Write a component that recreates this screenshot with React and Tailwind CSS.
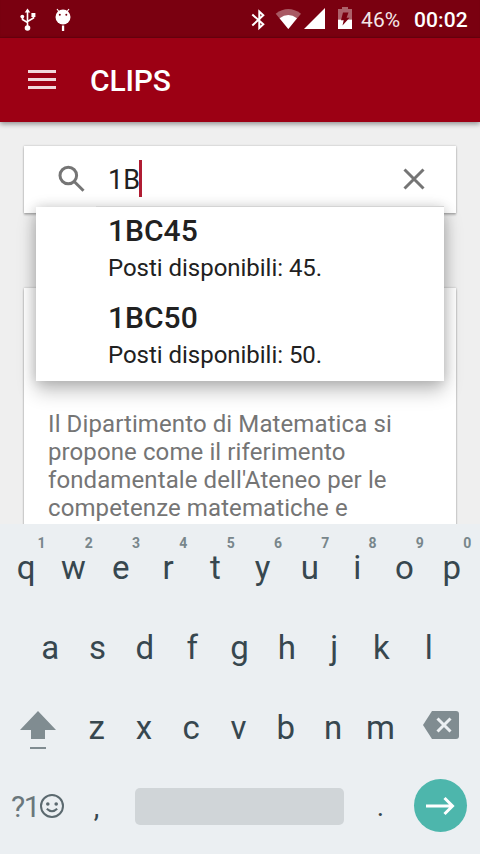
import React from 'react';

const topRow = [
  ['q', '1'], ['w', '2'], ['e', '3'], ['r', '4'], ['t', '5'],
  ['y', '6'], ['u', '7'], ['i', '8'], ['o', '9'], ['p', '0'],
];

const results = [
  { name: '1BC45', seats: 'Posti disponibili: 45.' },
  { name: '1BC50', seats: 'Posti disponibili: 50.' },
];

const description = [
  'Il Dipartimento di Matematica si',
  'propone come il riferimento',
  "fondamentale dell'Ateneo per le",
  'competenze matematiche e',
];

function Key({ label, hint }) {
  return (
    <div className="relative h-20 w-[47.3px] text-center leading-[80px]">
      {label}
      {hint && (
        <span className="absolute top-[7px] left-[34px] w-[10px] text-center text-[14px] leading-4 font-bold text-[#78868b]">
          {hint}
        </span>
      )}
    </div>
  );
}

function StatusBar() {
  return (
    <div className="flex h-[38px] items-center bg-[#7a0010] text-white shadow-[inset_0_-1px_1px_rgba(0,0,0,0.12)]">
      <svg className="ml-5 h-6 w-4" viewBox="0 0 16 24" fill="none" stroke="white" strokeWidth="1.6">
        <path d="M7.5 3v16M2.500 9v3.500l5 3M13.500 7v4l-6 3.500" />
        <path d="M7.500 1.500l2.800 4H4.700z" fill="white" stroke="none" />
        <circle cx="2.300" cy="9.600" r="1.900" fill="white" stroke="none" />
        <rect x="11.400" y="6" width="4" height="4" fill="white" stroke="none" />
        <circle cx="7.500" cy="21" r="2.800" fill="white" stroke="none" />
      </svg>
      <svg className="ml-[19px] h-6 w-4" viewBox="0 0 16 24">
        <path d="M2 2l3 4M14 2l-3 4" stroke="white" strokeWidth="1.2" />
        <circle cx="8" cy="10" r="7.500" fill="white" />
        <path d="M6.900 18.500h2.300V24H6.900z" fill="white" />
        <circle cx="4.800" cy="7.800" r="1" fill="#7a0010" />
        <circle cx="11.300" cy="7.800" r="1" fill="#7a0010" />
      </svg>
      <svg className="ml-[179px] h-6 w-[18px]" viewBox="0 0 18 24" fill="none" stroke="white" strokeWidth="2">
        <path d="M2.300 7.500L13.300 17.300 9.300 21V4.500l4 3.700L2.300 18.500" />
      </svg>
      <svg className="ml-[7px] h-6 w-[27px]" viewBox="0 0 27 24">
        <path d="M.7 6.700Q13.200-2.500 26 6.700L13.300 22z" fill="white" fillOpacity=".35" />
        <path d="M4.600 11.300Q13.300 4.500 22 11.300L13.300 22z" fill="white" />
      </svg>
      <svg className="ml-[2px] h-6 w-[22px]" viewBox="0 0 22 24">
        <path d="M21 1v21H0z" fill="white" />
      </svg>
      <svg className="ml-3 h-6 w-[14px]" viewBox="0 0 14 24">
        <path d="M0 2h4V0h6v2h4v10.500H0z" fill="white" fillOpacity=".38" />
        <path d="M0 12.500h14V22H0z" fill="white" />
        <path d="M5 5.500h5.500L8.600 10.800h2.900L4.500 18.500l1.200-5.200H3z" fill="#7a0010" />
      </svg>
      <span className="mt-[2px] ml-[9px] w-[53px] text-[21px] leading-6 tracking-[0.1px] text-[#f4e6e8]">46%</span>
      <span className="mt-[2px] text-[21px] leading-6 font-medium tracking-[0.1px]">00:02</span>
    </div>
  );
}

function Keyboard() {
  return (
    <div className="h-[330px] bg-[#ebeff2] pt-[4px] text-[33px] text-[#37474f]">
      <div className="flex pl-[2.5px]">
        {topRow.map(([label, hint]) => <Key key={label} label={label} hint={hint} />)}
      </div>
      <div className="flex justify-center pr-[1px]">
        {[...'asdfghjkl'].map((c) => <Key key={c} label={c} />)}
      </div>
      <div className="flex items-center">
        <div className="w-[73px] pt-[3px] pl-5">
          <svg className="h-10 w-9" viewBox="0 0 36 40" fill="#808c91">
            <path d="M18 1L36 20H25v9H11v-9H0z" />
            <path d="M10 37h16v2H10z" />
          </svg>
        </div>
        {[...'zxcvbnm'].map((c) => <Key key={c} label={c} />)}
        <svg className="mb-[6px] ml-[19px] h-7 w-9" viewBox="0 0 36 28">
          <path d="M9 0h24q3 0 3 3v22q0 3-3 3H9L0 14z" fill="#808c91" />
          <path d="M14.500 7.500l13 13M27.500 7.500l-13 13" stroke="#ebeff2" strokeWidth="3" />
        </svg>
      </div>
      <div className="flex h-[77px] items-center">
        <span className="ml-[11px] w-[29px] text-[30px] leading-10 tracking-[-1.5px] whitespace-nowrap text-[#6a777c]">?1</span>
        <svg className="mb-px h-6 w-6 shrink-0" viewBox="0 0 24 24" fill="none" stroke="#5b696f" strokeWidth="2">
          <circle cx="12" cy="12" r="11" />
          <path d="M6.800 14.800q5.200 5 10.400 0" />
          <circle cx="7.800" cy="10" r="1.800" fill="#5b696f" stroke="none" />
          <circle cx="16.200" cy="10" r="1.800" fill="#5b696f" stroke="none" />
        </svg>
        <span className="mt-[2px] ml-[9px] w-[47px] text-center text-[28px]">,</span>
        <div className="ml-[15px] h-[37px] w-[209px] rounded-[5px] bg-[#d0d5d8]" />
        <span className="ml-[13px] w-[47px] text-center text-[28px]">.</span>
        <div className="mb-[2px] ml-[10px] flex h-[53px] w-[53px] shrink-0 items-center justify-center rounded-full bg-[#4db6ac]">
          <svg className="h-5 w-[29px]" viewBox="0 0 29 20" fill="none" stroke="white" strokeWidth="3">
            <path d="M0 10h27M18.500 2l8 8-8 8" />
          </svg>
        </div>
      </div>
    </div>
  );
}

export default function App() {
  return (
    <div className="flex h-[854px] w-[480px] flex-col overflow-hidden bg-[#efefef] font-[Roboto,sans-serif]">
      <StatusBar />
      <header className="z-10 flex h-[84px] items-center bg-[#9c0014] pl-7 shadow-[0_2px_5px_rgba(0,0,0,0.4)]">
        <div className="mb-[2px] flex w-[62px] flex-col gap-[5px]">
          <div className="h-[3px] w-7 bg-[#f1d8db]" />
          <div className="h-[3px] w-7 bg-[#f1d8db]" />
          <div className="h-[3px] w-7 bg-[#f1d8db]" />
        </div>
        <h1 className="mt-[2px] text-[30px] leading-9 font-medium tracking-[-0.2px] text-white">CLIPS</h1>
      </header>

      <main className="h-[402px] overflow-hidden px-6 pt-6">
        <div className="relative flex h-[67px] items-center bg-white pb-[2px] shadow-[0_2px_2px_rgba(0,0,0,0.22),0_0_2px_rgba(0,0,0,0.25)]">
          <svg className="ml-[34px] h-7 w-7" viewBox="0 0 28 28" fill="none" stroke="#757575" strokeWidth="3">
            <circle cx="10.300" cy="10.500" r="8.300" />
            <path d="M16.200 16.500l9.300 9.300" />
          </svg>
          <span className="mt-[2px] ml-[22px] text-[27px] leading-8 text-[#212121]">1B</span>
          <span className="-ml-px h-[37px] w-[3px] bg-[#b01c32]" />
          <svg className="mr-[31px] ml-auto h-[22px] w-[22px]" viewBox="0 0 22 22" stroke="#757575" strokeWidth="3">
            <path d="M1.500 1.500l19 19M20.500 1.500l-19 19" />
          </svg>

          <div className="absolute top-[61px] left-3 z-10 w-[408px] bg-white text-[#212121] shadow-[0_10px_18px_rgba(0,0,0,0.24),0_0_12px_rgba(0,0,0,0.18)]">
            <div className="absolute -top-px right-0 left-[60px] h-px bg-[#d4d4d4]" />
            {results.map((r) => (
              <div key={r.name} className="h-[87px] pt-[6px] pl-[72px]">
                <div className="text-[30px] leading-[35px] font-medium">{r.name}</div>
                <div className="mt-[6px] text-[24px] leading-7 tracking-[-0.03px]">{r.seats}</div>
              </div>
            ))}
          </div>
        </div>

        <section className="mt-[75px] h-[300px] bg-white px-6 pt-[122px] text-[24px] leading-7 tracking-[0.1px] text-[#757575] shadow-[0_2px_2px_rgba(0,0,0,0.22),0_0_2px_rgba(0,0,0,0.25)]">
          {description.map((line) => <p key={line} className="whitespace-nowrap">{line}</p>)}
        </section>
      </main>
      <Keyboard />
    </div>
  );
}
